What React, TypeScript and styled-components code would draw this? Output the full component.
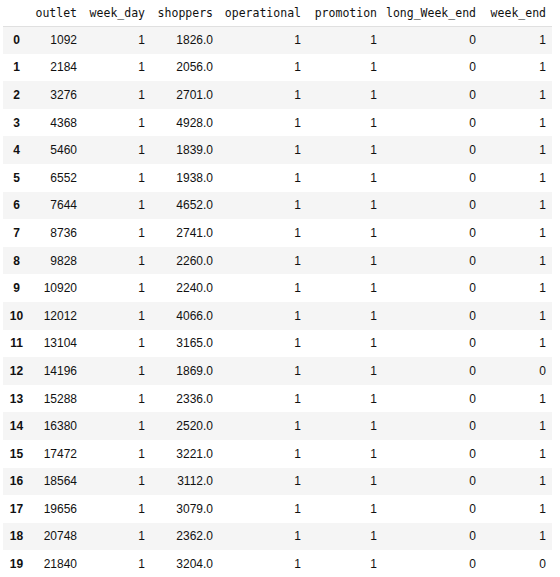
import React from 'react'
import styled, { createGlobalStyle } from 'styled-components'

const GlobalStyle = createGlobalStyle`
  body {
    margin: 0;
    background: #fff;
    font-family: "Liberation Sans", Arial, sans-serif;
  }
`

const Wrapper = styled.div`
  padding: 0 0 0 3px;
`

const Table = styled.table`
  border-collapse: collapse;
  border-spacing: 0;
  table-layout: fixed;
  font-size: 12px;
  color: #000;
`

const HeadCell = styled.th<{ $w: number }>`
  width: ${p => p.$w}px;
  height: 26px;
  padding: 1px 6px 0 0;
  box-sizing: border-box;
  text-align: right;
  vertical-align: middle;
  font-family: "DejaVu Sans Mono", "Liberation Mono", monospace;
  font-size: 11.5px;
  font-weight: normal;
  color: #111;
  border-bottom: 1px solid #e0e0e0;
  white-space: nowrap;
`

const Row = styled.tr<{ $striped: boolean }>`
  background: ${p => (p.$striped ? '#f5f5f5' : '#fff')};
`

const IndexCell = styled.th`
  height: 27.6px;
  padding: 0;
  box-sizing: border-box;
  text-align: center;
  font-weight: bold;
  font-size: 12px;
  color: #111;
`

const Cell = styled.td`
  height: 27.6px;
  padding: 0 6px 0 0;
  box-sizing: border-box;
  text-align: right;
  color: #111;
`

const columns = [
  { name: '', w: 27 },
  { name: 'outlet', w: 53 },
  { name: 'week_day', w: 68 },
  { name: 'shoppers', w: 68 },
  { name: 'operational', w: 88 },
  { name: 'promotion', w: 76 },
  { name: 'long_Week_end', w: 99 },
  { name: 'week_end', w: 70 },
]

const shoppers = [
  1826, 2056, 2701, 4928, 1839, 1938, 4652, 2741, 2260, 2240,
  4066, 3165, 1869, 2336, 2520, 3221, 3112, 3079, 2362, 3204,
]

const rows = shoppers.map((s, i) => ({
  outlet: 1092 * (i + 1),
  week_day: 1,
  shoppers: s.toFixed(1),
  operational: 1,
  promotion: 1,
  long_Week_end: 0,
  week_end: i === 12 || i === 19 ? 0 : 1,
}))

const App: React.FC = () => {
  return (
    <Wrapper>
      <GlobalStyle />
      <Table>
        <thead>
          <tr>
            {columns.map(c => (
              <HeadCell key={c.name} $w={c.w}>{c.name}</HeadCell>
            ))}
          </tr>
        </thead>
        <tbody>
          {rows.map((r, i) => (
            <Row key={i} $striped={i % 2 === 0}>
              <IndexCell>{i}</IndexCell>
              <Cell>{r.outlet}</Cell>
              <Cell>{r.week_day}</Cell>
              <Cell>{r.shoppers}</Cell>
              <Cell>{r.operational}</Cell>
              <Cell>{r.promotion}</Cell>
              <Cell>{r.long_Week_end}</Cell>
              <Cell>{r.week_end}</Cell>
            </Row>
          ))}
        </tbody>
      </Table>
    </Wrapper>
  )
}

export default App
